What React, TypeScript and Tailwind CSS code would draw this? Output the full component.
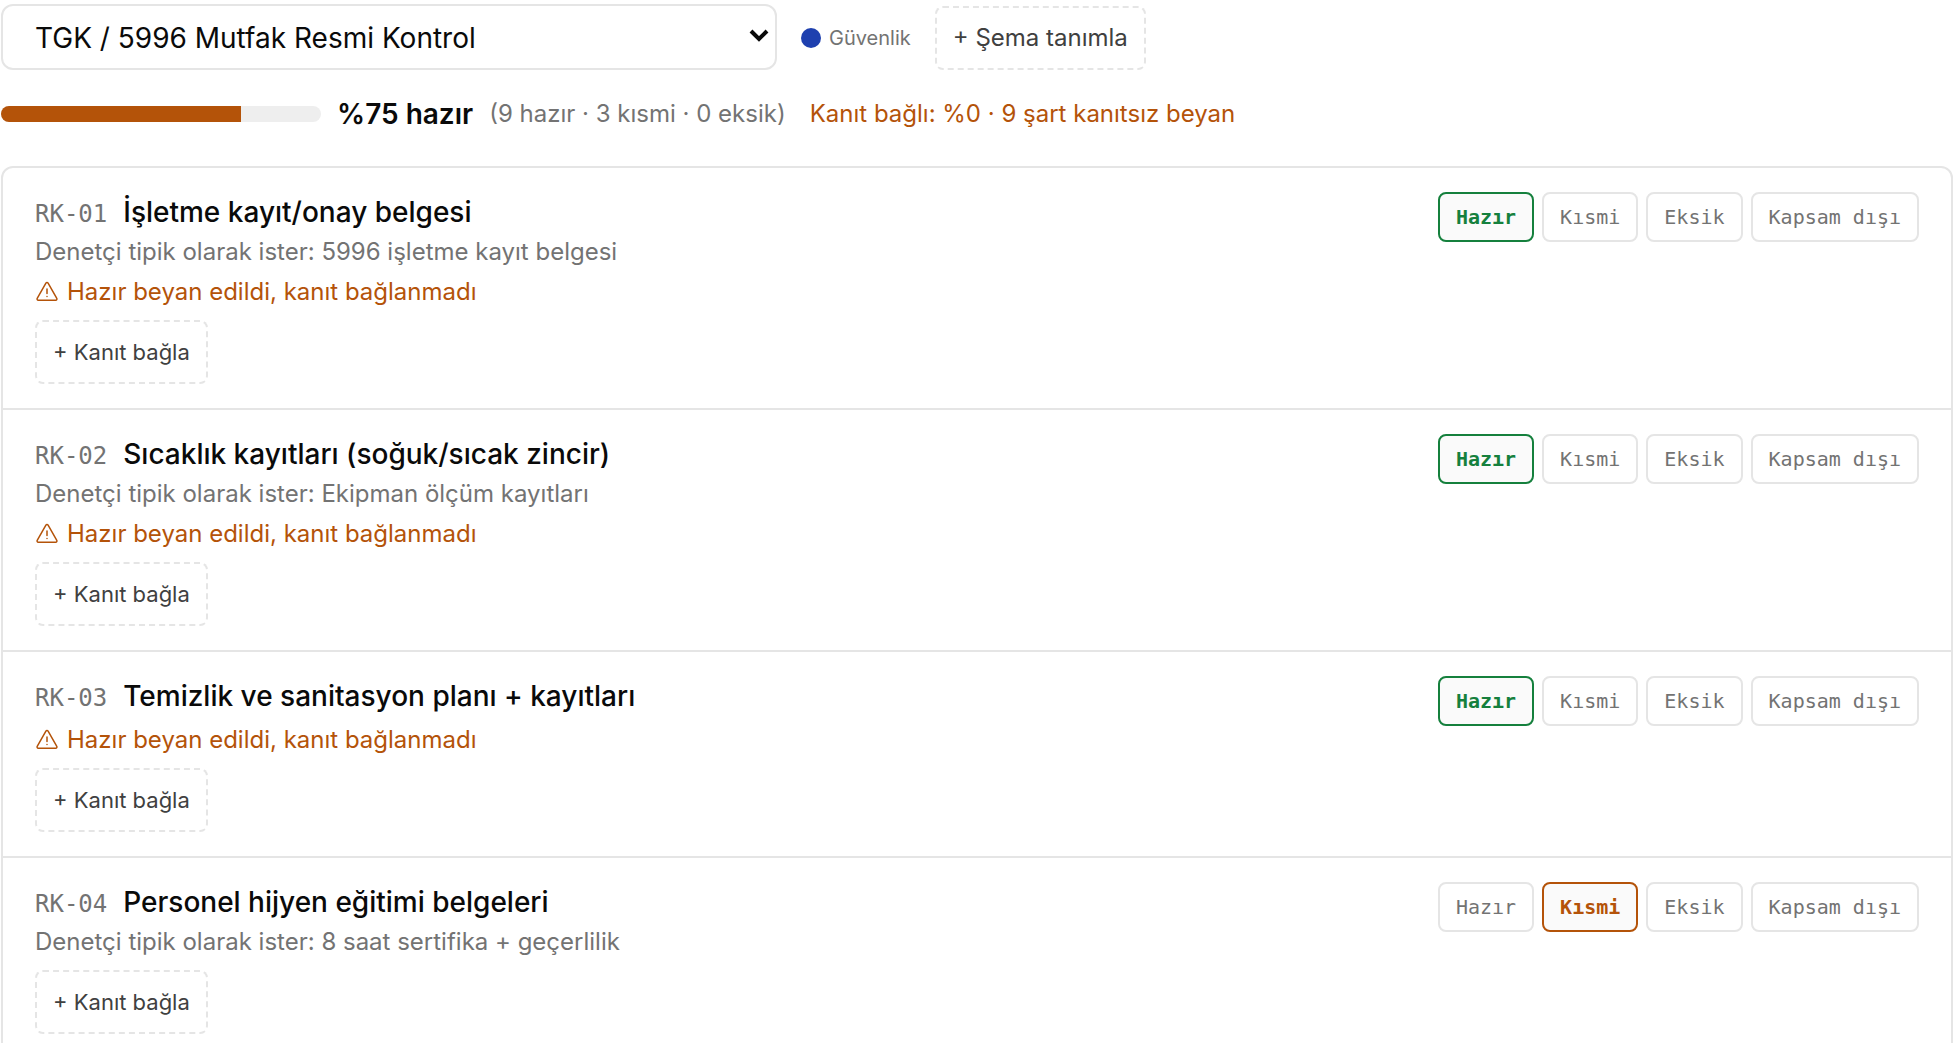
import React, { useState } from 'react';
import clsx from 'clsx';

type Status = 'hazir' | 'kismi' | 'eksik' | 'kapsam';

interface Requirement {
  code: string;
  title: string;
  hint?: string;
  status: Status;
}

const STATUSES: { id: Status; label: string; active: string }[] = [
  { id: 'hazir', label: 'Hazır', active: 'border-[#15803d] text-[#15803d]' },
  { id: 'kismi', label: 'Kısmi', active: 'border-[#b45309] text-[#b45309]' },
  { id: 'eksik', label: 'Eksik', active: 'border-[#b91c1c] text-[#b91c1c]' },
  { id: 'kapsam', label: 'Kapsam dışı', active: 'border-[#404040] text-[#404040]' },
];

const REQUIREMENTS: Requirement[] = [
  { code: 'RK-01', title: 'İşletme kayıt/onay belgesi', hint: '5996 işletme kayıt belgesi', status: 'hazir' },
  { code: 'RK-02', title: 'Sıcaklık kayıtları (soğuk/sıcak zincir)', hint: 'Ekipman ölçüm kayıtları', status: 'hazir' },
  { code: 'RK-03', title: 'Temizlik ve sanitasyon planı + kayıtları', status: 'hazir' },
  { code: 'RK-04', title: 'Personel hijyen eğitimi belgeleri', hint: '8 saat sertifika + geçerlilik', status: 'kismi' },
];

const READY_PERCENT = 75;

function WarningIcon() {
  return (
    <svg
      viewBox="0 0 24 24"
      className="h-6 w-6 shrink-0"
      fill="none"
      stroke="currentColor"
      strokeWidth="1.5"
      strokeLinecap="round"
      strokeLinejoin="round"
      aria-hidden="true"
    >
      <path d="M10.9 3.2 2.2 18.4a1.3 1.3 0 0 0 1.1 1.9h17.4a1.3 1.3 0 0 0 1.1-1.9L13.1 3.2a1.3 1.3 0 0 0-2.2 0Z" />
      <path d="M12 9v4.5M12 16.4v.2" />
    </svg>
  );
}

function RequirementRow({ item }: { item: Requirement }) {
  const [status, setStatus] = useState<Status>(item.status);

  return (
    <li className="flex items-start justify-between gap-6 border-b-2 border-[#e5e5e5] px-8 py-6">
      <div className="min-w-0">
        <div className="flex items-baseline gap-4">
          <span className="font-['DejaVu_Sans_Mono',monospace] text-2xl leading-10 text-[#737373]">{item.code}</span>
          <h3 className="text-[28px] leading-10 font-medium">{item.title}</h3>
        </div>
        {item.hint && <p className="text-2xl leading-9 text-[#737373]">Denetçi tipik olarak ister: {item.hint}</p>}
        {status === 'hazir' && (
          <p className="mt-1 flex items-center gap-2 text-2xl leading-9 text-[#b45309]">
            <WarningIcon />
            Hazır beyan edildi, kanıt bağlanmadı
          </p>
        )}
        <button
          type="button"
          className="mt-[10px] block h-16 rounded-lg border-2 border-dashed border-[#e5e5e5] px-4 text-[22px] text-[#404040]"
        >
          + Kanıt bağla
        </button>
      </div>

      <div className="flex shrink-0 gap-2">
        {STATUSES.map((s) => (
          <button
            key={s.id}
            type="button"
            aria-pressed={status === s.id}
            onClick={() => setStatus(s.id)}
            className={clsx(
              "h-[50px] rounded-lg border-2 px-4 font-['DejaVu_Sans_Mono',monospace] text-xl",
              status === s.id ? ['bg-[#fafafa] font-bold', s.active] : 'border-[#e5e5e5] text-[#737373]',
            )}
          >
            {s.label}
          </button>
        ))}
      </div>
    </li>
  );
}

export default function App() {
  return (
    <main className="bg-white pt-1 pr-[5px] pl-px font-['Inter',sans-serif] text-[#0a0a0a]">
      <div className="flex items-end gap-6">
        <div className="relative">
          <select
            aria-label="Şema"
            className="block h-[66px] w-[776px] appearance-none rounded-xl border-2 border-[#e5e5e5] bg-white px-8 pt-0.5 text-[28px]"
          >
            <option>TGK / 5996 Mutfak Resmi Kontrol</option>
          </select>
          <svg
            viewBox="0 0 20 14"
            className="pointer-events-none absolute top-6 right-2 h-[14px] w-5"
            fill="none"
            stroke="#0a0a0a"
            strokeWidth="4"
            aria-hidden="true"
          >
            <path d="m2 3 8 8 8-8" />
          </svg>
        </div>
        <div className="flex h-16 items-center gap-2">
          <span className="h-5 w-5 rounded-full bg-[#1e40af]" />
          <span className="text-xl text-[#737373]">Güvenlik</span>
        </div>
        <button
          type="button"
          className="h-16 rounded-lg border-2 border-dashed border-[#e5e5e5] px-4 text-2xl text-[#404040]"
        >
          + Şema tanımla
        </button>
      </div>

      <div className="mt-6 flex h-10 items-center">
        <div className="h-4 w-80 overflow-hidden rounded-full bg-[#eeeeee]">
          <div className="h-full bg-[#b45309]" style={{ width: `${READY_PERCENT}%` }} />
        </div>
        <strong className="ml-4 text-[28px] font-semibold">%{READY_PERCENT} hazır</strong>
        <span className="ml-4 text-2xl text-[#737373]">(9 hazır · 3 kısmi · 0 eksik)</span>
        <span className="ml-6 text-2xl text-[#b45309]">Kanıt bağlı: %0 · 9 şart kanıtsız beyan</span>
      </div>

      <ul className="mt-8 rounded-xl border-2 border-[#e5e5e5]">
        {REQUIREMENTS.map((item) => (
          <RequirementRow key={item.code} item={item} />
        ))}
      </ul>
    </main>
  );
}
